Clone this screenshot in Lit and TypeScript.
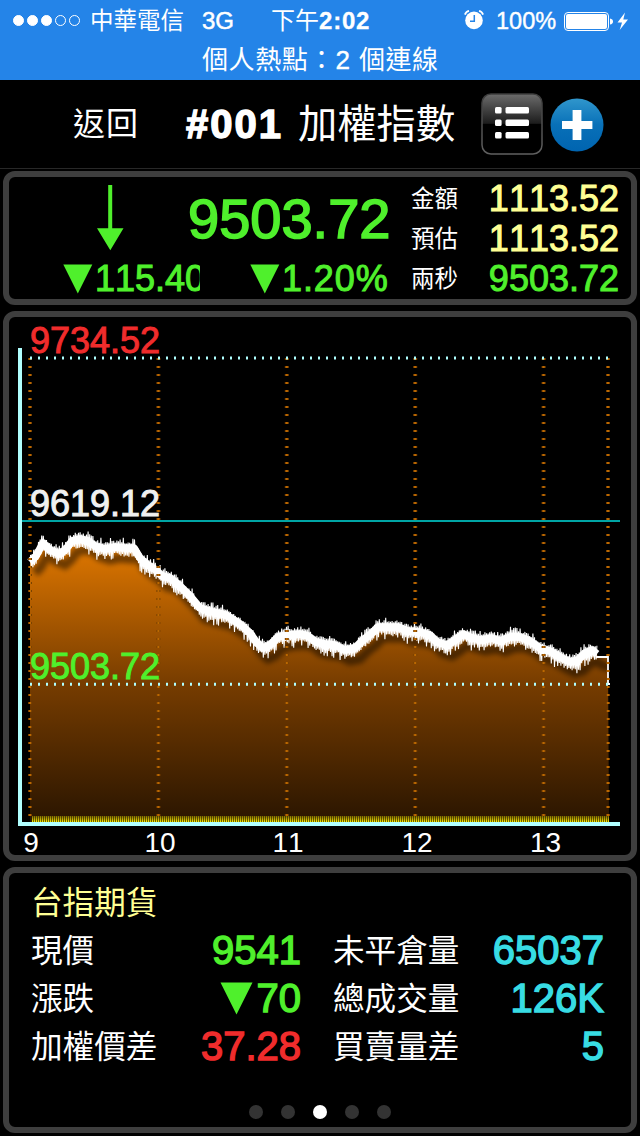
import { LitElement, html, css, svg } from 'lit';
import { customElement, property } from 'lit/decorators.js';

type Point = [number, number];

/* Intraday index curve: x is time, y is price, both in chart units. */
const CURVE: Point[] = [
  [30, 562], [36, 556], [43, 543], [50, 550], [60, 554], [66, 549], [72, 541], [80, 539],
  [88, 541], [95, 546], [105, 549], [115, 547], [125, 548], [134, 548], [140, 558], [148, 565],
  [156, 570], [162, 576], [170, 578], [178, 584], [190, 596], [200, 608], [213, 612], [226, 615],
  [240, 624], [250, 633], [257, 643], [263, 648], [270, 645], [278, 637], [287, 635], [300, 634],
  [308, 636], [316, 642], [325, 644], [335, 645], [345, 650], [355, 648], [363, 640], [371, 634],
  [378, 627], [390, 627], [398, 627], [408, 631], [420, 632], [430, 635], [437, 642], [447, 645],
  [455, 640], [463, 634], [470, 637], [480, 640], [492, 638], [500, 641], [510, 637], [520, 637],
  [530, 641], [540, 648], [550, 651], [560, 657], [570, 662], [578, 660], [585, 653], [592, 650],
  [597, 654],
];

const HOURS = [30, 158.4, 286.8, 415.2, 543.6, 608];
const HOUR_LABELS: [string, number][] = [['9', 31], ['10', 160], ['11', 288], ['12', 417], ['13', 545.5]];

function priceAt(x: number): number {
  for (let i = 1; i < CURVE.length; i++) {
    const [x1, y1] = CURVE[i];
    if (x <= x1) {
      const [x0, y0] = CURVE[i - 1];
      return y0 + ((y1 - y0) * (x - x0)) / (x1 - x0);
    }
  }
  return CURVE[CURVE.length - 1][1];
}

function ticks(): string {
  let seed = 7;
  const rand = () => {
    seed = (seed * 16807) % 2147483647;
    return seed / 2147483647;
  };
  const out: string[] = [];
  let up = true;
  for (let x = 30.5; x < 597; x += 0.8) {
    const spike = rand();
    const size = spike > 0.75 ? 7.5 + rand() * 4.5 : 5 + rand() * 3;
    out.push(`${x.toFixed(2)},${(priceAt(x) + (up ? -size * 0.85 : size * 1.1)).toFixed(1)}`);
    up = !up;
  }
  return out.join(' ');
}

const LINE = CURVE.map((p) => p.join(',')).join(' ');
const AREA = `30,822 ${LINE} 598,657 608,657 609,822`;
const TICKS = ticks();

@customElement('price-chart')
export class PriceChart extends LitElement {
  static styles = css`
    :host { display: block; height: 538px; }
    svg { display: block; overflow: visible; }
    text { font-family: 'Liberation Sans', sans-serif; font-kerning: none; }
    .price { font-size: 36px; stroke-width: 1px; }
    .high { fill: #f02c2c; stroke: #f02c2c; }
    .mid { fill: #f0f0f0; stroke: #f0f0f0; }
    .low { fill: #4ff02c; stroke: #4ff02c; }
    .hour { font-size: 28px; fill: #fff; text-anchor: middle; }
  `;

  render() {
    return html`
      <svg width="622" height="538" viewBox="9 317 622 538">
        <defs>
          <linearGradient id="fill" gradientUnits="userSpaceOnUse" x1="0" y1="536" x2="0" y2="822">
            <stop offset="0" stop-color="#e67b00" />
            <stop offset=".52" stop-color="#763c00" />
            <stop offset="1" stop-color="#2a1500" />
          </linearGradient>
          <linearGradient id="vol" x1="0" y1="0" x2="0" y2="1">
            <stop offset="0" stop-color="#7a6a00" />
            <stop offset="1" stop-color="#fff200" />
          </linearGradient>
          <pattern id="bars" patternUnits="userSpaceOnUse" x="32" y="816" width="2" height="6">
            <rect width="1.35" height="6" fill="url(#vol)" />
          </pattern>
          <clipPath id="area"><polygon points=${AREA} /></clipPath>
          <filter id="soft" x="-5%" y="-20%" width="110%" height="150%"><feGaussianBlur stdDeviation="2.6" /></filter>
        </defs>
        <polygon points=${AREA} fill="url(#fill)" />
        <g clip-path="url(#area)">
          <polyline points=${LINE + ' 608,657'} transform="translate(5 11)" fill="none" stroke="#000"
            stroke-opacity=".48" stroke-width="9" filter="url(#soft)" />
        </g>
        <polyline points=${LINE} fill="none" stroke="#fff" stroke-width="7.5" stroke-linejoin="round" />
        <polyline points=${TICKS} fill="none" stroke="#fff" stroke-width="1.1" stroke-linejoin="bevel" />
        <path d="M596 657H608V684H610" fill="none" stroke="#fff" stroke-width="1.8" />
        <rect x="32" y="816" width="577" height="6" fill="url(#bars)" />
        ${HOURS.map((x) => svg`
          <line x1=${x} x2=${x} y1="358" y2="817" stroke="#7a4200" stroke-width="4" stroke-dasharray="2 6" />
          <line x1=${x} x2=${x} y1="358" y2="817" stroke="#bc6800" stroke-width="2" stroke-dasharray="2 6" />`)}
        <rect x="22" y="520" width="598" height="2" fill="#00a5a5" />
        <line x1="30" x2="609" y1="358" y2="358" stroke="#b0ffff" stroke-width="3" stroke-dasharray="2 6" />
        <line x1="30" x2="609" y1="684.3" y2="684.3" stroke="#b0ffff" stroke-width="3" stroke-dasharray="2 6" />
        <path d="M18 348H22V822H620V826H18Z" fill="#b0ffff" />
        <text class="price high" x="30" y="353.4">9734.52</text>
        <text class="price mid" x="30" y="516.4">9619.12</text>
        <text class="price low" x="30" y="679.4">9503.72</text>
        ${HOUR_LABELS.map(([t, x]) => svg`<text class="hour" x=${x} y="852">${t}</text>`)}
      </svg>
    `;
  }
}

@customElement('status-bar')
export class StatusBar extends LitElement {
  static styles = css`
    :host { display: block; height: 80px; background: #2484e8; color: #fff; }
    .row { display: flex; align-items: center; height: 41px; line-height: 42px; font-size: 24px; white-space: nowrap; }
    .signal { display: flex; gap: 3px; width: 77px; padding-left: 13px; }
    .signal i { box-sizing: border-box; width: 11px; height: 11px; border-radius: 50%; border: 1px solid #fff; }
    .signal .on { background: #fff; }
    .carrier { width: 112px; font-size: 23.5px; }
    .net { width: 69px; -webkit-text-stroke: 0.5px #fff; }
    .time { display: flex; width: 193px; }
    .time b { letter-spacing: 0.8px; -webkit-text-stroke: 0.3px #fff; }
    .alarm { width: 20px; height: 20px; margin: -1px 12px 0 0; }
    .pct { width: 67px; font-size: 23.5px; -webkit-text-stroke: 0.4px #fff; }
    .hotspot { height: 37px; line-height: 38px; font-size: 26px; letter-spacing: 0.6px; padding-left: 202px; white-space: nowrap; }
    .count { -webkit-text-stroke: 0.4px #fff; margin: 0 0.5px; }
  `;

  render() {
    return html`
      <div class="row">
        <div class="signal">
          ${[1, 1, 1, 0, 0].map((on) => html`<i class=${on ? 'on' : ''}></i>`)}
        </div>
        <span class="carrier">中華電信</span>
        <span class="net">3G</span>
        <span class="time">下午<b>2:02</b></span>
        <svg class="alarm" viewBox="0 0 20 20">
          <circle cx="10" cy="10.4" r="8.8" fill="#fff" />
          <path d="M.9 4.6Q2 1.6 5 .9M15 .9Q18 1.6 19.1 4.6" fill="none" stroke="#fff" stroke-width="1.8" />
          <path d="M10.3 5V11.2H6" fill="none" stroke="#2484e8" stroke-width="1.5" />
        </svg>
        <span class="pct">100%</span>
        <svg width="66" height="24" viewBox="563 8 66 24">
          <rect x="564.5" y="11.5" width="44" height="18" rx="3.5" fill="none" stroke="#fff" />
          <rect x="566" y="13" width="41" height="15" rx="2" fill="#fff" />
          <path d="M610 17.5q3 .5 3 3t-3 3z" fill="#fff" />
          <path d="M625 11.5L617.5 21.5H622L619.7 29L628 18.6H623.3Z" fill="#fff" />
        </svg>
      </div>
      <div class="hotspot">個人熱點：<span class="count">2</span> 個連線</div>
    `;
  }
}

@customElement('quote-panel')
export class QuotePanel extends LitElement {
  static styles = css`
    :host { display: flex; height: 122px; color: #4ff02c; font-size: 36px; -webkit-text-stroke: 1px; }
    .left { width: 402px; }
    .main { display: flex; height: 83px; }
    .arrow { width: 28px; height: 66px; margin: 8px 63px 0 88px; }
    .last { font-size: 56px; line-height: 84px; -webkit-text-stroke-width: 1.6px; }
    .change { display: flex; height: 37px; line-height: 38px; padding-left: 54px; }
    .tri { width: 30px; height: 30px; margin-top: 4px; flex: none; }
    .diff { width: 105px; overflow: hidden; margin-left: 2px; margin-right: 50px; }
    .rate { letter-spacing: 0.9px; margin-left: 2px; }
    .right { width: 208px; padding-top: 1px; }
    .line { display: flex; justify-content: space-between; height: 40px; line-height: 42px; }
    .line span { font-size: 23.5px; color: #fff; -webkit-text-stroke: 0; }
    .cash { color: #ffff94; }
  `;

  render() {
    const tri = html`<svg class="tri" viewBox="0 0 30 30"><path d="M.3.5H29.3L14.8 29.5Z" fill="#4ff02c" /></svg>`;
    return html`
      <div class="left">
        <div class="main">
          <svg class="arrow" viewBox="0 0 28 66"><path d="M11.2 0H15.2V43.3H26.5L13.3 65.3L0 43.3H11.2Z" fill="#4ff02c" /></svg>
          <div class="last">9503.72</div>
        </div>
        <div class="change">
          ${tri}<div class="diff">115.40</div>${tri}<div class="rate">1.20%</div>
        </div>
      </div>
      <div class="right">
        <div class="line cash"><span>金額</span>1113.52</div>
        <div class="line cash"><span>預估</span>1113.52</div>
        <div class="line"><span>兩秒</span>9503.72</div>
      </div>
    `;
  }
}

@customElement('futures-panel')
export class FuturesPanel extends LitElement {
  @property({ type: Number }) page = 2;

  static styles = css`
    :host { display: flex; flex-direction: column; height: 254px; color: #fff; font-size: 31.6px; line-height: 50px; }
    .title { color: #ffff94; height: 48px; padding: 5px 0 0 22px; }
    .grid { display: grid; grid-template-columns: 270px 271px; column-gap: 32px; padding-left: 22px; }
    .cell { display: flex; justify-content: space-between; height: 48px; }
    .val { display: flex; font-size: 40px; line-height: 48px; -webkit-text-stroke: 1.4px; }
    .up { color: #f02c2c; }
    .down { color: #4ff02c; }
    .info { color: #38dce4; }
    .tri { width: 33px; height: 33px; margin: 7.5px 4px 0 0; }
    .dots { display: flex; justify-content: center; gap: 18px; padding-top: 35px; }
    .dots i { width: 14px; height: 14px; border-radius: 50%; background: #333; }
    .dots .on { background: #fff; }
  `;

  render() {
    return html`
      <div class="title">台指期貨</div>
      <div class="grid">
        <div class="cell">現價<span class="val down">9541</span></div>
        <div class="cell">未平倉量<span class="val info">65037</span></div>
        <div class="cell">漲跌<span class="val down"><svg class="tri" viewBox="0 0 33 33"><path d="M.5.5H32.5L16.5 32.5Z" fill="#4ff02c" /></svg>70</span></div>
        <div class="cell">總成交量<span class="val info">126K</span></div>
        <div class="cell">加權價差<span class="val up">37.28</span></div>
        <div class="cell">買賣量差<span class="val info">5</span></div>
      </div>
      <div class="dots">
        ${[0, 1, 2, 3, 4].map((i) => html`<i class=${i === this.page ? 'on' : ''}></i>`)}
      </div>
    `;
  }
}

@customElement('app-root')
export class AppRoot extends LitElement {
  static styles = css`
    :host {
      display: block; width: 640px; height: 1136px; overflow: hidden; background: #000; color: #fff;
      font-family: 'Liberation Sans', 'Noto Sans CJK TC', sans-serif; font-kerning: none;
    }
    .bar { display: flex; align-items: center; height: 88px; line-height: 92px; border-bottom: 1px solid #282828; white-space: nowrap; }
    .back { width: 113px; padding-left: 73px; font-size: 32px; letter-spacing: 1px; }
    .code { width: 112px; font-size: 40px; line-height: 88px; font-weight: bold; letter-spacing: 2px; -webkit-text-stroke: 1.4px #fff; }
    .name { width: 183px; font-size: 39.3px; }
    .list { width: 62px; height: 62px; margin-right: 7px; }
    .add { width: 54px; height: 54px; margin-top: 2px; }
    .panels { display: flex; flex-direction: column; gap: 6px; padding: 2px 3px 3px; }
    .panel { border: 6px solid #3e3e3e; border-radius: 12px; }
  `;

  render() {
    return html`
      <status-bar></status-bar>
      <div class="bar">
        <span class="back">返回</span>
        <span class="code">#001</span>
        <span class="name">加權指數</span>
        <svg class="list" viewBox="0 0 62 62">
          <defs>
            <linearGradient id="gloss" x1="0" y1="0" x2="0" y2="1">
              <stop offset="0" stop-color="#6c6c6c" />
              <stop offset=".49" stop-color="#1c1c1c" />
              <stop offset=".5" stop-color="#000" />
            </linearGradient>
            <linearGradient id="edge" x1="0" y1="0" x2="0" y2="1">
              <stop offset="0" stop-color="#3c3c3c" />
              <stop offset="1" stop-color="#606060" />
            </linearGradient>
          </defs>
          <rect x="1" y="1" width="60" height="60" rx="9" fill="url(#gloss)" stroke="url(#edge)" stroke-width="1.5" />
          <g fill="#fff">
            ${[14, 26.5, 39].map((y) => svg`
              <rect x="14" y=${y} width="6.6" height="6.6" rx="1.5" />
              <rect x="24.5" y=${y} width="23.5" height="6.6" rx="1.5" />`)}
          </g>
        </svg>
        <svg class="add" viewBox="0 0 54 54">
          <defs>
            <linearGradient id="blue" x1="0" y1="0" x2="0" y2="1">
              <stop offset="0" stop-color="#3096cc" />
              <stop offset=".5" stop-color="#0870b8" />
              <stop offset="1" stop-color="#0064b0" />
            </linearGradient>
          </defs>
          <circle cx="27" cy="27" r="26.5" fill="url(#blue)" />
          <path d="M22.6 12h8.8v11h11v8H31.4v11H22.6V31H12V23H22.6Z" fill="#fff" />
        </svg>
      </div>
      <div class="panels">
        <quote-panel class="panel"></quote-panel>
        <price-chart class="panel"></price-chart>
        <futures-panel class="panel"></futures-panel>
      </div>
    `;
  }
}
